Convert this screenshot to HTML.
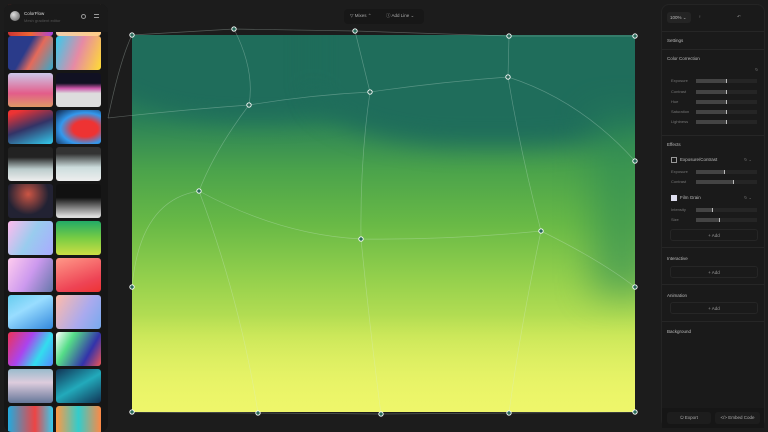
<!DOCTYPE html>
<html><head><meta charset="utf-8"><style>
*{margin:0;padding:0;box-sizing:border-box}
body{width:768px;height:432px;background:#1c1c1c;font-family:"Liberation Sans",sans-serif;overflow:hidden;position:relative;color:#ccc}
.lp{position:absolute;left:4px;top:4px;width:104px;height:428px;background:#161616;border-radius:8px;overflow:hidden}
.hd{position:absolute;left:0;top:0;width:104px;height:28px;background:#1a1a1a;z-index:2}
.th{position:absolute;width:45px;height:34px;border-radius:3px}
.rp{position:absolute;left:661px;top:4px;width:104px;height:424px;background:#1a1a1a;border-radius:8px;border:1px solid #242424}
.t{position:absolute;font-size:4.5px;color:#bbb}
.s{position:absolute;font-size:4px;color:#777}
.bar{position:absolute;height:4px;background:#252525}
.bar i{position:absolute;left:0;top:0;height:4px;background:#444;border-right:1px solid #bbb}
.ln{position:absolute;left:0;width:102px;height:1px;background:#262626}
.btn{position:absolute;left:8px;width:88px;height:12px;border:1px solid #262626;border-radius:3px;font-size:4.5px;color:#999;text-align:center;line-height:11px}
.cv{position:absolute;left:132px;top:35px;width:503px;height:377px;overflow:hidden;
background:linear-gradient(180deg,#1f6e5c 0%,#2a8058 22%,#4ba34b 36%,#68b946 50%,#92cf4c 64%,#c3e456 80%,#e9f468 100%)}
</style></head><body>
<div class="lp">
<div class="hd"><div style="position:absolute;left:6px;top:7px;width:10px;height:10px;border-radius:50%;background:radial-gradient(circle at 35% 35%,#ddd,#555)"></div>
<div class="t" style="left:20px;top:7px;color:#ddd">ColorFlow</div><div class="s" style="left:20px;top:14px;color:#555">Mesh gradient editor</div>
<div style="position:absolute;left:77px;top:10px;width:5px;height:5px;border:1px solid #999;border-radius:50%"></div>
<div style="position:absolute;left:90px;top:10px;width:5px;height:4px;border-top:1px solid #999;border-bottom:1px solid #999"></div></div>
<div class="th" style="left:4px;top:-2px;background:linear-gradient(90deg,#c33,#e63,#a4d)"></div><div class="th" style="left:52px;top:-2px;background:linear-gradient(90deg,#eca,#fc8)"></div>
<div class="th" style="left:4px;top:32px;background:linear-gradient(120deg,#2a3b8a 40%,#e56a5a 60%,#3ac)"></div><div class="th" style="left:52px;top:32px;background:linear-gradient(110deg,#3ce,#e68aa5 50%,#fd3)"></div>
<div class="th" style="left:4px;top:69px;background:linear-gradient(180deg,#ccc8ea,#e35d8a 60%,#d96)"></div><div class="th" style="left:52px;top:69px;background:linear-gradient(180deg,#112 30%,#c5a 45%,#ddd 60%)"></div>
<div class="th" style="left:4px;top:106px;background:linear-gradient(160deg,#e33 10%,#336 50%,#3ce)"></div><div class="th" style="left:52px;top:106px;background:radial-gradient(ellipse at 65% 55%,#e33 30%,#39e 60%,#124)"></div>
<div class="th" style="left:4px;top:143px;background:linear-gradient(180deg,#222 30%,#bcc 65%,#eee)"></div><div class="th" style="left:52px;top:143px;background:linear-gradient(180deg,#333 20%,#cdd 60%,#eee)"></div>
<div class="th" style="left:4px;top:180px;background:radial-gradient(circle at 45% 30%,#c54,#223 60%)"></div><div class="th" style="left:52px;top:180px;background:linear-gradient(180deg,#111 40%,#ddd 95%)"></div>
<div class="th" style="left:4px;top:217px;background:linear-gradient(120deg,#fbe,#9ce 50%,#aaf)"></div><div class="th" style="left:52px;top:217px;background:linear-gradient(180deg,#2a6 0%,#7c4 50%,#cd4)"></div>
<div class="th" style="left:4px;top:254px;background:linear-gradient(120deg,#fce,#c9e 50%,#67a)"></div><div class="th" style="left:52px;top:254px;background:linear-gradient(160deg,#f98,#e45 70%,#e33)"></div>
<div class="th" style="left:4px;top:291px;background:linear-gradient(150deg,#6ce,#9df 40%,#38d)"></div><div class="th" style="left:52px;top:291px;background:linear-gradient(120deg,#fba,#aae 60%,#7ae)"></div>
<div class="th" style="left:4px;top:328px;background:linear-gradient(120deg,#e35,#a4e 40%,#3de 70%,#58f)"></div><div class="th" style="left:52px;top:328px;background:linear-gradient(120deg,#fff,#5d8 30%,#33a 70%,#e55)"></div>
<div class="th" style="left:4px;top:365px;background:linear-gradient(180deg,#9bc,#dcd 40%,#679)"></div><div class="th" style="left:52px;top:365px;background:linear-gradient(150deg,#135,#2ab 50%,#135)"></div>
<div class="th" style="left:4px;top:402px;background:linear-gradient(90deg,#2ad,#e44 60%,#3ce)"></div><div class="th" style="left:52px;top:402px;background:linear-gradient(90deg,#f94,#3cc 50%,#f84)"></div>
</div>
<div class="cv">
<div style="position:absolute;left:-40px;top:-40px;width:300px;height:125px;background:#1f6d5b;border-radius:0 0 40% 50%;filter:blur(10px)"></div>
<div style="position:absolute;left:180px;top:-40px;width:380px;height:150px;background:#1f6d5b;border-radius:0 0 45% 40%;filter:blur(12px)"></div>
<div style="position:absolute;left:460px;top:80px;width:60px;height:180px;background:#2f8a55;filter:blur(18px);opacity:.6"></div>
<div style="position:absolute;left:0;top:280px;width:503px;height:100px;background:linear-gradient(180deg,transparent,#eef66a);"></div>
</div>
<svg style="position:absolute;left:0;top:0" width="768" height="432" fill="none" stroke="rgba(220,240,230,.3)" stroke-width=".7">
<path d="M108 118 Q 120 60 132 35 L234 29 L355 31 L509 36 L635 36"/>
<path d="M108 118 Q180 110 249 105 Q310 95 370 92 Q440 82 508 77 Q580 100 635 161"/>
<path d="M132 287 Q140 200 199 191 Q280 235 361 239 Q450 240 541 231 Q600 260 635 287"/>
<path d="M132 412 L258 413 L381 414 L509 413 L635 412"/>
<path d="M234 29 Q255 70 249 105 Q215 150 199 191 Q240 300 258 413"/>
<path d="M355 31 L370 92 Q360 160 361 239 Q370 330 381 414"/>
<path d="M509 36 L508 77 Q520 150 541 231 Q520 330 509 413"/>
<g fill="#2a6a5a" stroke="#fff" stroke-width=".9">
<circle cx="132" cy="35" r="2.2"/><circle cx="234" cy="29" r="2.2"/><circle cx="355" cy="31" r="2.2"/><circle cx="509" cy="36" r="2.2"/><circle cx="635" cy="36" r="2.2"/>
<circle cx="249" cy="105" r="2.2"/><circle cx="370" cy="92" r="2.2"/><circle cx="508" cy="77" r="2.2"/><circle cx="635" cy="161" r="2.2"/>
<circle cx="199" cy="191" r="2.2"/><circle cx="361" cy="239" r="2.2"/><circle cx="541" cy="231" r="2.2"/><circle cx="132" cy="287" r="2.2"/><circle cx="635" cy="287" r="2.2"/>
<circle cx="132" cy="412" r="2.2"/><circle cx="258" cy="413" r="2.2"/><circle cx="381" cy="414" r="2.2"/><circle cx="509" cy="413" r="2.2"/><circle cx="635" cy="412" r="2.2"/></g></svg>
<div style="position:absolute;left:344px;top:9px;width:80px;height:15px;background:#171717;border-radius:4px"></div>
<div class="t" style="left:350px;top:13px;color:#aaa">▽ Mixes ⌃</div><div class="t" style="left:386px;top:13px;color:#aaa">ⓘ Add Line ⌄</div>
<div class="rp">
<div style="position:absolute;left:5px;top:7px;width:24px;height:11px;background:#242424;border-radius:3px;font-size:4.5px;color:#bbb;line-height:11px;padding-left:3px">100% ⌄</div>
<div class="t" style="left:36px;top:9px;color:#777">♀</div><div class="t" style="left:75px;top:9px;color:#888">↶</div>
<div class="ln" style="top:26px"></div><div class="t" style="left:5px;top:33px">Settings</div>
<div class="ln" style="top:44px"></div><div class="t" style="left:5px;top:51px">Color Correction</div>
<div class="s" style="left:93px;top:62px">↻</div>
<div class="s" style="left:9px;top:73px">Exposure</div><div class="bar" style="left:34px;top:74px;width:61px"><i style="width:31px"></i></div>
<div class="s" style="left:9px;top:84px">Contrast</div><div class="bar" style="left:34px;top:85px;width:61px"><i style="width:31px"></i></div>
<div class="s" style="left:9px;top:94px">Hue</div><div class="bar" style="left:34px;top:95px;width:61px"><i style="width:31px"></i></div>
<div class="s" style="left:9px;top:104px">Saturation</div><div class="bar" style="left:34px;top:105px;width:61px"><i style="width:31px"></i></div>
<div class="s" style="left:9px;top:114px">Lightness</div><div class="bar" style="left:34px;top:115px;width:61px"><i style="width:31px"></i></div>
<div class="ln" style="top:130px"></div><div class="t" style="left:5px;top:137px">Effects</div>
<div style="position:absolute;left:9px;top:152px;width:6px;height:6px;border:1px solid #999"></div>
<div class="t" style="left:18px;top:152px">Exposure/Contrast</div><div class="s" style="left:82px;top:152px">↻ ⌄</div>
<div class="s" style="left:9px;top:164px">Exposure</div><div class="bar" style="left:34px;top:165px;width:61px"><i style="width:29px"></i></div>
<div class="s" style="left:9px;top:174px">Contrast</div><div class="bar" style="left:34px;top:175px;width:61px"><i style="width:38px"></i></div>
<div style="position:absolute;left:9px;top:190px;width:6px;height:6px;background:#dde"></div>
<div class="t" style="left:18px;top:190px">Film Grain</div><div class="s" style="left:82px;top:190px">↻ ⌄</div>
<div class="s" style="left:9px;top:202px">Intensity</div><div class="bar" style="left:34px;top:203px;width:61px"><i style="width:17px"></i></div>
<div class="s" style="left:9px;top:212px">Size</div><div class="bar" style="left:34px;top:213px;width:61px"><i style="width:24px"></i></div>
<div class="btn" style="top:224px">+ Add</div>
<div class="ln" style="top:242px"></div><div class="t" style="left:5px;top:251px">Interactive</div>
<div class="btn" style="top:261px">+ Add</div>
<div class="ln" style="top:279px"></div><div class="t" style="left:5px;top:288px">Animation</div>
<div class="btn" style="top:297px">+ Add</div>
<div class="ln" style="top:316px"></div><div class="t" style="left:5px;top:324px">Background</div>
<div style="position:absolute;left:0;top:403px;width:102px;height:20px;background:#161616"></div>
<div style="position:absolute;left:5px;top:407px;width:44px;height:12px;background:#1d1d1d;border-radius:3px;font-size:4.5px;color:#aaa;text-align:center;line-height:12px">⏻ Export</div>
<div style="position:absolute;left:53px;top:407px;width:45px;height:12px;background:#1d1d1d;border-radius:3px;font-size:4.5px;color:#aaa;text-align:center;line-height:12px">&lt;/&gt; Embed Code</div>
</div>
</body></html>
